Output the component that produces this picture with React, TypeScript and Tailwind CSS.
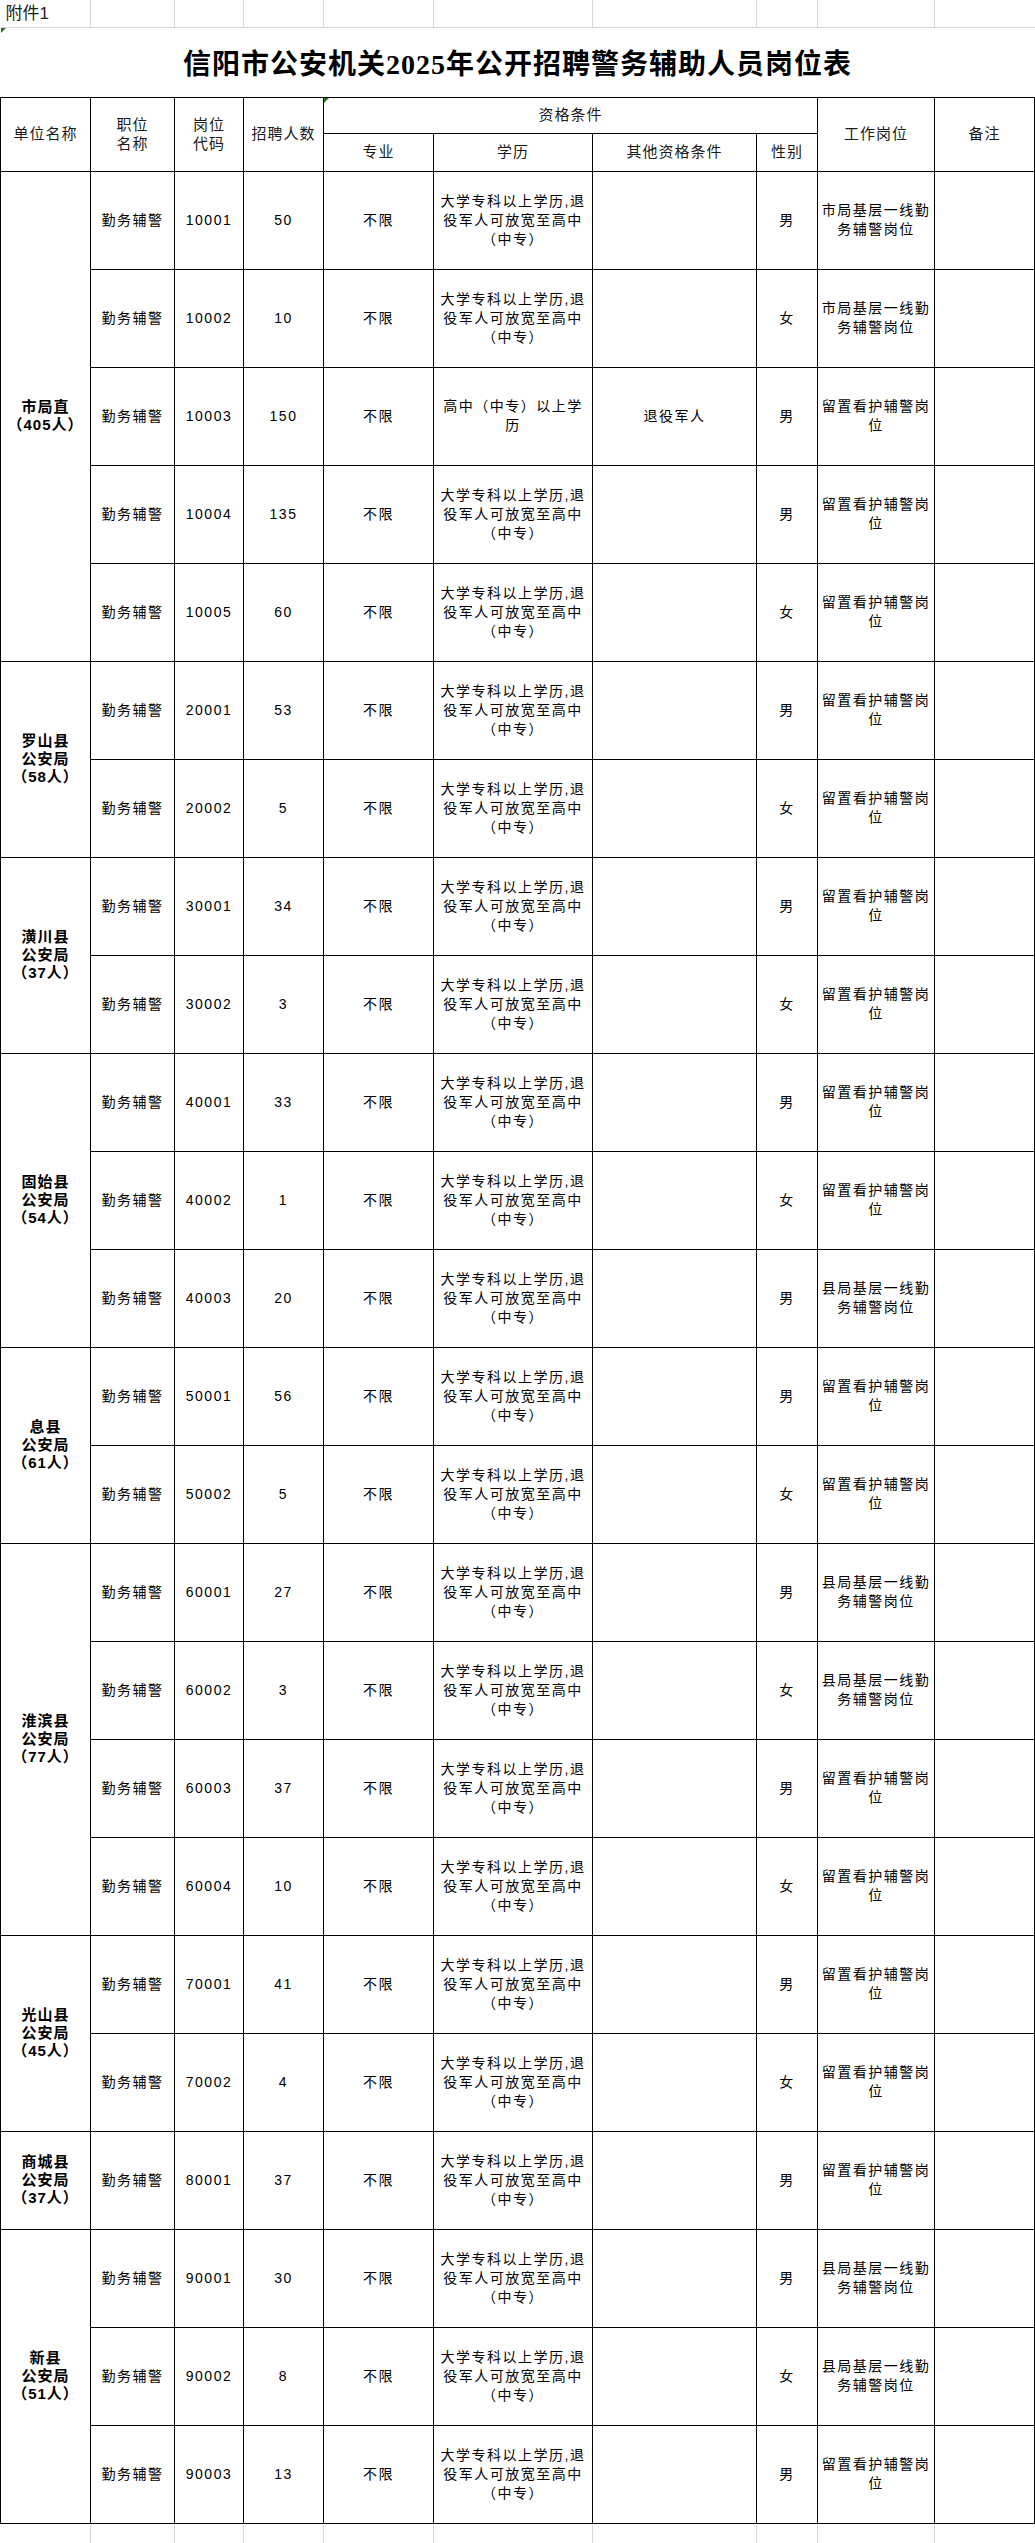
import React from 'react';

// column widths taken from the sheet grid
const COLS = [90, 84, 69, 80, 110, 159, 164, 61, 117, 100];

const EDU_STD = ['大学专科以上学历,退', '役军人可放宽至高中', '（中专）'];
const EDU_HS = ['高中（中专）以上学', '历'];

const JOBS: Record<string, string[]> = {
    city: ['市局基层一线勤', '务辅警岗位'],
    county: ['县局基层一线勤', '务辅警岗位'],
    detain: ['留置看护辅警岗', '位'],
};

type Post = { code: string; n: string; sex: string; job: string; hs?: boolean; other?: string };
type Unit = { name: string[]; posts: Post[] };

const UNITS: Unit[] = [
    {
        name: ['市局直', '（405人）'],
        posts: [
            { code: '10001', n: '50', sex: '男', job: 'city' },
            { code: '10002', n: '10', sex: '女', job: 'city' },
            { code: '10003', n: '150', sex: '男', job: 'detain', hs: true, other: '退役军人' },
            { code: '10004', n: '135', sex: '男', job: 'detain' },
            { code: '10005', n: '60', sex: '女', job: 'detain' },
        ],
    },
    {
        name: ['罗山县', '公安局', '（58人）'],
        posts: [
            { code: '20001', n: '53', sex: '男', job: 'detain' },
            { code: '20002', n: '5', sex: '女', job: 'detain' },
        ],
    },
    {
        name: ['潢川县', '公安局', '（37人）'],
        posts: [
            { code: '30001', n: '34', sex: '男', job: 'detain' },
            { code: '30002', n: '3', sex: '女', job: 'detain' },
        ],
    },
    {
        name: ['固始县', '公安局', '（54人）'],
        posts: [
            { code: '40001', n: '33', sex: '男', job: 'detain' },
            { code: '40002', n: '1', sex: '女', job: 'detain' },
            { code: '40003', n: '20', sex: '男', job: 'county' },
        ],
    },
    {
        name: ['息县', '公安局', '（61人）'],
        posts: [
            { code: '50001', n: '56', sex: '男', job: 'detain' },
            { code: '50002', n: '5', sex: '女', job: 'detain' },
        ],
    },
    {
        name: ['淮滨县', '公安局', '（77人）'],
        posts: [
            { code: '60001', n: '27', sex: '男', job: 'county' },
            { code: '60002', n: '3', sex: '女', job: 'county' },
            { code: '60003', n: '37', sex: '男', job: 'detain' },
            { code: '60004', n: '10', sex: '女', job: 'detain' },
        ],
    },
    {
        name: ['光山县', '公安局', '（45人）'],
        posts: [
            { code: '70001', n: '41', sex: '男', job: 'detain' },
            { code: '70002', n: '4', sex: '女', job: 'detain' },
        ],
    },
    {
        name: ['商城县', '公安局', '（37人）'],
        posts: [{ code: '80001', n: '37', sex: '男', job: 'detain' }],
    },
    {
        name: ['新县', '公安局', '（51人）'],
        posts: [
            { code: '90001', n: '30', sex: '男', job: 'county' },
            { code: '90002', n: '8', sex: '女', job: 'county' },
            { code: '90003', n: '13', sex: '男', job: 'detain' },
        ],
    },
];

const Lines = ({ items }: { items: string[] }) => (
    <>
        {items.map((t, i) => (
            <div key={i}>{t}</div>
        ))}
    </>
);

const td = 'border border-black text-center align-middle p-0';
const th = 'border border-black text-center align-middle p-0 font-normal text-[15px] tracking-[1px] text-[#1a1a1a]';
const grid = 'border-r border-[#d6d6d6]';

const Marker = () => (
    <span className="absolute left-0 top-0 w-0 h-0 border-t-[5px] border-r-[5px] border-t-[#1f7a1f] border-r-transparent" />
);

export default function App() {
    return (
        <div className="w-[1035px] h-[2543px] overflow-hidden bg-white text-black font-['Liberation_Sans','Noto_Sans_CJK_SC',sans-serif]">
            <table className="table-fixed border-collapse w-[1035px]">
                <colgroup>
                    {COLS.map((w, i) => (
                        <col key={i} style={{ width: w }} />
                    ))}
                </colgroup>
                <tbody>
                    {/* sheet row 1 */}
                    <tr className="h-[27px]">
                        <td className={`${grid} border-b border-b-[#d6d6d6] p-0 pl-[5px] text-[17px] leading-none text-[#222]`}>附件1</td>
                        {COLS.slice(1).map((_, i) => (
                            <td key={i} className={`${i < 8 ? grid : ''} border-b border-b-[#d6d6d6] p-0`} />
                        ))}
                    </tr>
                    {/* title */}
                    <tr className="h-[70px]">
                        <td colSpan={10} className="relative border-b border-b-black p-0 pt-[6px] text-center align-middle">
                            <Marker />
                            <span className="font-['Liberation_Serif','Noto_Sans_CJK_SC',serif] font-bold text-[28px] tracking-[1px]">
                                信阳市公安机关2025年公开招聘警务辅助人员岗位表
                            </span>
                        </td>
                    </tr>
                    {/* header */}
                    <tr className="h-[36px]">
                        <th rowSpan={2} className={th}>单位名称</th>
                        <th rowSpan={2} className={`${th} leading-[19px]`}>
                            <Lines items={['职位', '名称']} />
                        </th>
                        <th rowSpan={2} className={`${th} leading-[19px]`}>
                            <Lines items={['岗位', '代码']} />
                        </th>
                        <th rowSpan={2} className={th}>招聘人数</th>
                        <th colSpan={4} className={`${th} relative`}>
                            <Marker />
                            资格条件
                        </th>
                        <th rowSpan={2} className={th}>工作岗位</th>
                        <th rowSpan={2} className={th}>备注</th>
                    </tr>
                    <tr className="h-[38px]">
                        <th className={th}>专业</th>
                        <th className={th}>学历</th>
                        <th className={th}>其他资格条件</th>
                        <th className={th}>性别</th>
                    </tr>
                    {UNITS.map(u =>
                        u.posts.map((p, i) => (
                            <tr key={p.code} className="h-[98px] text-[14px] tracking-[1.5px] leading-[19px]">
                                {i === 0 && (
                                    <td rowSpan={u.posts.length} className={`${td} font-bold text-[15px] tracking-[1px] leading-[18px]`}>
                                        <Lines items={u.name} />
                                    </td>
                                )}
                                <td className={td}>勤务辅警</td>
                                <td className={td}>{p.code}</td>
                                <td className={td}>{p.n}</td>
                                <td className={td}>不限</td>
                                <td className={td}>
                                    <Lines items={p.hs ? EDU_HS : EDU_STD} />
                                </td>
                                <td className={td}>{p.other ?? ''}</td>
                                <td className={td}>{p.sex}</td>
                                <td className={td}>
                                    <Lines items={JOBS[p.job]} />
                                </td>
                                <td className={td} />
                            </tr>
                        ))
                    )}
                    {/* trailing sheet row */}
                    <tr className="h-[20px]">
                        {COLS.map((_, i) => (
                            <td key={i} className={`${i < 9 ? grid : ''} p-0`} />
                        ))}
                    </tr>
                </tbody>
            </table>
        </div>
    );
}
